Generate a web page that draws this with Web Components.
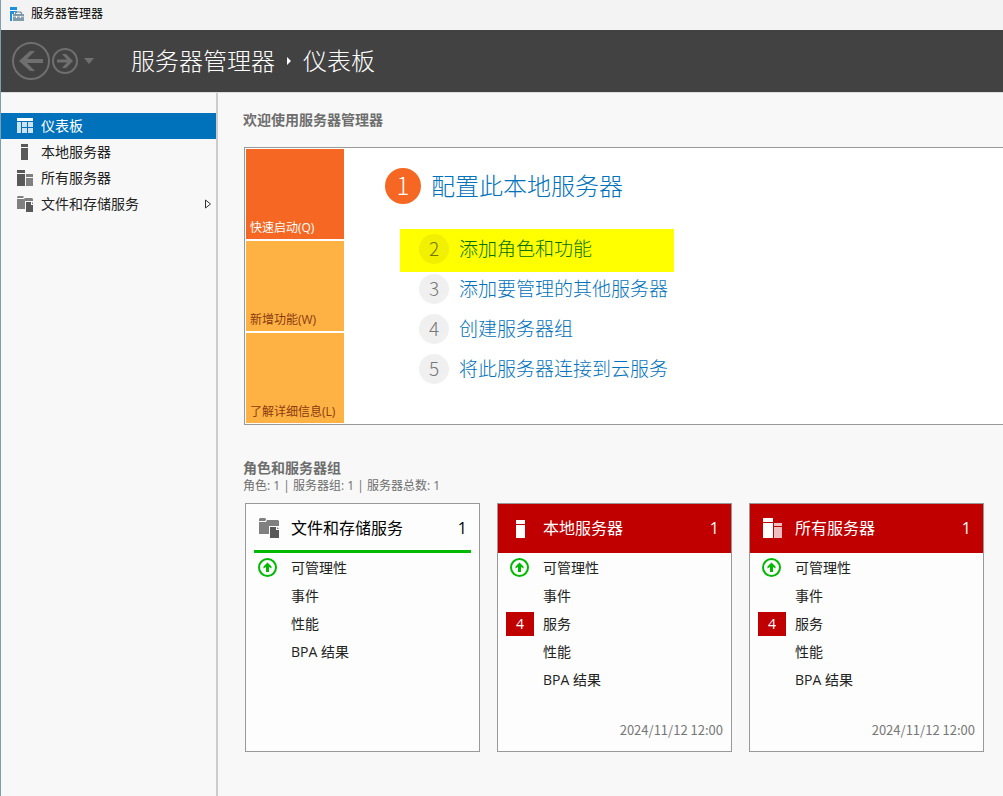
<!DOCTYPE html>
<html lang="zh-CN">
<head>
<meta charset="utf-8">
<title>服务器管理器</title>
<style>
  body {
    margin: 0;
    font-family: "Open Sans", "Noto Sans CJK SC", sans-serif;
    font-size: 14px;
    line-height: 20px;
    color: #222;
    background: #f8f8f8;
  }
</style>
</head>
<body>
<sm-app></sm-app>

<script>
const ICONS = {
  app: [16, `<path fill="#1e90dd" d="M1 1h7v3H1zM1 5h7v1H5v2H3v7H1z"/><path fill="none" stroke="#6b8799" stroke-width="1.200" d="M6.500 8.500V7l1-1h4l1 1v1.500"/><path fill="#7f9bac" d="M4 8h11v7H4z"/><path fill="#fff" d="M4 10.500h11v.6H4z"/><path fill="#fff" d="M7 10h1v2H7zM11 10h1v2h-1z"/>`],
  dashboard: [16, `<path fill="#fff" d="M0 0h16v3H0z"/><path fill="#cce3f1" d="M0 4h4v11H0zM5 4h5v5H5zM11 4h5v5h-5zM5 10h5v5H5zM11 10h5v5h-5z"/>`],
  server: [16, `<path fill="#595959" d="M4 0h7v3H4zM4 4h7v12H4z"/>`],
  servers: [16, `<path fill="#595959" d="M0 0h8v3H0zM0 4h8v12H0z"/><path fill="#808080" d="M9 4h7v3H9zM9 8h7v8H9z"/>`],
  files: [16, `<path fill="#808080" d="M0 1l1-1h5l1 1-1 1H0zM0 3h7l1-1h7l1 1v10H0z"/><path fill="#f8f8f8" d="M8 5h8v8H8z"/><path fill="#595959" d="M9 6h5v3h2v7H9z"/><path fill="#808080" d="M15 6l1 1v1h-1z"/>`],
  filesLarge: [20, `<path fill="#808080" d="M0 1l1-1h5l1 1v1L6 3H0zM0 4h7l1-2h11l1 1v13H0z"/><path fill="#fdfdfd" d="M10 8h10v8H10z"/><path fill="#595959" d="M11 9h6v3h3v8h-9z"/><path fill="#808080" d="M18 9l2 2h-2z"/>`],
  serverLarge: [20, `<path fill="#fff" d="M5 2h9v4H5zM5 7h9v13H5z"/>`],
  serversLarge: [20, `<path fill="#fff" d="M0 0h10v4H0zM0 5h10v15H0z"/><path fill="#efbfbf" d="M11 5h8v3h-8zM11 9h8v11h-8z"/>`],
  online: [20, `<circle cx="9.500" cy="9.500" r="8.500" fill="none" stroke="#00b900" stroke-width="2"/><path fill="#00b900" d="M9.500 4.500l4 4v2l-2.500-1.500v5H8V9l-2.500 1.500v-2z"/>`],
  back: [38, `<circle cx="19" cy="19" r="18" fill="none" stroke="#6f6f6f" stroke-width="2"/><path fill="#6f6f6f" d="M7 19L18 9h5l-8 8h16v4H15l8 8h-5z"/>`],
  forward: [26, `<circle cx="13" cy="13" r="12" fill="none" stroke="#6f6f6f" stroke-width="2"/><path fill="#6f6f6f" d="M21 13l-7 7h-4l5-5.500H5v-3h10L10 6h4z"/>`],
  caret: [12, `<path fill="#6f6f6f" d="M1 3h10L6 9z"/>`],
  crumb: [10, `<path fill="#fff" d="M3 1l4 4-4 4z"/>`],
  expand: [12, `<path fill="#fff" stroke="#333" d="M3.500 2l5 4-5 4z"/>`]
};

function icon(name) {
  const el = document.createElement("sm-icon");
  el.setAttribute("name", name);
  return el;
}

const define = (name, html, fill) => customElements.define(name, class extends HTMLElement {
  connectedCallback() {
    if (this.shadowRoot) return;
    const root = this.attachShadow({ mode: "open" });
    root.innerHTML = html;
    if (fill) fill(root, this);
  }
});

define("sm-icon", `<style>:host{display:block;flex:none}svg{display:block}</style>`, (root, el) => {
  const [size, shape] = ICONS[el.getAttribute("name")];
  root.innerHTML += `<svg width="${size}" height="${size}" viewBox="0 0 ${size} ${size}" aria-hidden="true">${shape}</svg>`;
});

define("sm-titlebar", `
  <style>
    :host{display:flex;align-items:center;gap:6px;height:30px;padding:0 8px 2px;background:#f3f3f3;color:#000;font-size:12px;line-height:28px;box-sizing:border-box}
  </style>
  <sm-icon name="app"></sm-icon><span><slot></slot></span>`);

define("sm-header", `
  <style>
    :host{display:flex;align-items:center;height:62px;padding-left:11px;background:#424242;color:#fff;border-bottom:1px solid #dcdcdc}
    button{border:0;padding:0;background:none}
    .tools{display:flex;align-items:center;gap:2px;width:119px}
    .more{margin-left:3px}
    h1{display:flex;align-items:center;gap:9px;margin:0;font-size:24px;line-height:38px;font-weight:300}
    h1 sm-icon{padding-bottom:1px}
  </style>
  <div class="tools">
    <button aria-label="后退"><sm-icon name="back"></sm-icon></button>
    <button aria-label="前进"><sm-icon name="forward"></sm-icon></button>
    <button class="more" aria-label="历史记录"><sm-icon name="caret"></sm-icon></button>
  </div>
  <h1><slot name="app"></slot><sm-icon name="crumb"></sm-icon><slot name="page"></slot></h1>`);

define("sm-nav-item", `
  <style>
    :host{display:block}
    a{display:flex;align-items:center;gap:8px;height:26px;padding:0 2px 0 16px;color:#222;text-decoration:none}
    :host([current]) a{background:#0072bc;color:#fff}
    span{flex:1}
  </style>
  <a href="#"><span><slot></slot></span></a>`, (root, el) => {
  const link = root.querySelector("a");
  link.prepend(icon(el.getAttribute("icon")));
  if (el.hasAttribute("expandable")) link.append(icon("expand"));
});

define("sm-tile", `
  <style>
    :host{display:flex}
    button{flex:1;display:flex;align-items:flex-end;height:90px;padding:0 4px 1px;border:0;background:#ffb244;color:#8a3a10;font:inherit;font-size:12px;line-height:20px;white-space:nowrap}
    :host([active]) button{background:#f56723;color:#fff}
  </style>
  <button><slot></slot></button>`);

define("sm-step", `
  <style>
    :host{display:flex;align-items:center;gap:10px;height:40px;padding-left:19px;font-size:19px;line-height:30px;font-weight:300}
    .num{flex:none;width:30px;height:30px;border-radius:50%;background:#f0f0f0;color:#777;text-align:center;font-family:"Noto Sans CJK SC",sans-serif;line-height:28px}
    a{color:#0072bc;text-decoration:none}
    :host([primary]){height:36px;padding:0;font-size:24px}
    :host([primary]) .num{width:36px;height:36px;line-height:34px;background:#f56723;color:#fff}
    :host([marked]){width:274px;height:43px;box-sizing:border-box;margin-bottom:-3px;padding-bottom:3px;background:#ff0}
    :host([marked]) .num{background:#f0f000;color:#777700}
    :host([marked]) a{color:#007200}
  </style>
  <span class="num"></span><a href="#"><slot></slot></a>`, (root, el) => {
  root.querySelector(".num").textContent = el.getAttribute("num");
});

define("sm-welcome", `
  <style>
    :host{display:flex;border:1px solid #999;border-right:0;background:#fff;padding:1px;gap:41px}
    .tiles{display:flex;flex-direction:column;gap:2px;width:98px}
    .steps{padding-top:19px}
    .list{padding:25px 0 0 15px}
  </style>
  <div class="tiles">
    <sm-tile active>快速启动(Q)</sm-tile>
    <sm-tile>新增功能(W)</sm-tile>
    <sm-tile>了解详细信息(L)</sm-tile>
  </div>
  <div class="steps">
    <sm-step primary num="1">配置此本地服务器</sm-step>
    <div class="list">
      <sm-step marked num="2">添加角色和功能</sm-step>
      <sm-step num="3">添加要管理的其他服务器</sm-step>
      <sm-step num="4">创建服务器组</sm-step>
      <sm-step num="5">将此服务器连接到云服务</sm-step>
    </div>
  </div>`);

define("sm-row", `
  <style>
    :host{display:grid;grid-template-columns:28px 1fr;column-gap:9px;align-items:center;height:28px}
    .mark{display:grid;place-items:center}
    .badge{width:28px;height:24px;line-height:24px;background:#c00000;color:#fff;text-align:center}
    a{color:#222;text-decoration:none}
  </style>
  <span class="mark"></span><a href="#"><slot></slot></a>`, (root, el) => {
  const mark = root.querySelector(".mark");
  if (el.hasAttribute("online")) mark.append(icon("online"));
  if (el.hasAttribute("count")) {
    mark.classList.add("badge");
    mark.textContent = el.getAttribute("count");
  }
});

define("sm-card", `
  <style>
    :host{display:flex;flex-direction:column;min-height:249px;box-sizing:border-box;border:1px solid #999;background:#fdfdfd}
    header{display:flex;align-items:center;gap:12px;height:49px;box-sizing:border-box;margin:0 8px;padding:2px 4px 0 5px;border-bottom:3px solid #00b900;color:#000;font-size:16px;line-height:24px}
    :host([alert]) header{margin:0;padding:2px 12px 0 13px;border-color:#c00000;background:#c00000;color:#fff}
    h3{flex:1;margin:0;font-size:16px;font-weight:400}
    .rows{flex:1;padding:1px 8px 0}
    footer{padding:0 8px 11px;text-align:right;font-family:"Noto Sans CJK SC",sans-serif;font-size:13px;line-height:20px;color:#777}
  </style>
  <header><h3></h3><span>1</span></header>
  <div class="rows"><slot></slot></div>
  <footer><slot name="time"></slot></footer>`, (root, el) => {
  root.querySelector("header").prepend(icon(el.getAttribute("icon")));
  root.querySelector("h3").textContent = el.getAttribute("label");
});

define("sm-app", `
  <style>
    :host{display:flex;flex-direction:column;min-height:100vh;box-sizing:border-box;border-left:1px solid #7f9db0}
    .body{flex:1;display:flex}
    nav{width:215px;padding-top:20px;border-right:2px solid #ccc}
    main{flex:1;min-width:0;padding:17px 0 20px 25px}
    h2{margin:0;font-size:14px;line-height:20px;font-weight:700;color:#6e6e6e}
    sm-welcome{margin:17px 0 33px 1px}
    p{margin:0;font-size:12px;line-height:16px;color:#6e6e6e}
    .cards{display:grid;grid-template-columns:repeat(3,minmax(0,1fr));gap:17px;margin:9px 19px 0 2px}
    time{font:inherit}
  </style>
  <sm-titlebar>服务器管理器</sm-titlebar>
  <sm-header><span slot="app">服务器管理器</span><span slot="page">仪表板</span></sm-header>
  <div class="body">
    <nav>
      <sm-nav-item current icon="dashboard">仪表板</sm-nav-item>
      <sm-nav-item icon="server">本地服务器</sm-nav-item>
      <sm-nav-item icon="servers">所有服务器</sm-nav-item>
      <sm-nav-item icon="files" expandable>文件和存储服务</sm-nav-item>
    </nav>
    <main>
      <h2>欢迎使用服务器管理器</h2>
      <sm-welcome></sm-welcome>
      <h2>角色和服务器组</h2>
      <p>角色: 1 | 服务器组: 1 | 服务器总数: 1</p>
      <div class="cards">
        <sm-card icon="filesLarge" label="文件和存储服务">
          <sm-row online>可管理性</sm-row>
          <sm-row>事件</sm-row>
          <sm-row>性能</sm-row>
          <sm-row>BPA 结果</sm-row>
        </sm-card>
        <sm-card alert icon="serverLarge" label="本地服务器">
          <sm-row online>可管理性</sm-row>
          <sm-row>事件</sm-row>
          <sm-row count="4">服务</sm-row>
          <sm-row>性能</sm-row>
          <sm-row>BPA 结果</sm-row>
          <time slot="time">2024/11/12 12:00</time>
        </sm-card>
        <sm-card alert icon="serversLarge" label="所有服务器">
          <sm-row online>可管理性</sm-row>
          <sm-row>事件</sm-row>
          <sm-row count="4">服务</sm-row>
          <sm-row>性能</sm-row>
          <sm-row>BPA 结果</sm-row>
          <time slot="time">2024/11/12 12:00</time>
        </sm-card>
      </div>
    </main>
  </div>`);
</script>
</body>
</html>
